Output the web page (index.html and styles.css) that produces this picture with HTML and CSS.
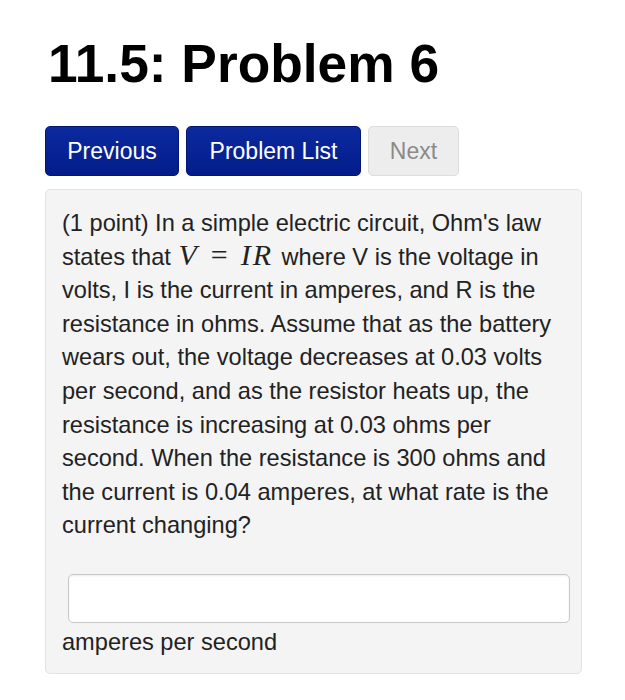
FILE: index.html
```html
<!DOCTYPE html>
<html>
<head>
<meta charset="utf-8">
<link rel="stylesheet" href="styles.css">
</head>
<body>
<div class="page">
  <h1 class="title">11.5: Problem 6</h1>
  <div class="nav">
    <span class="btn btn-primary">Previous</span>
    <span class="btn btn-primary">Problem List</span>
    <span class="btn btn-disabled">Next</span>
  </div>
  <div class="well">
    <p class="problem">(1 point) In a simple electric circuit, Ohm's law states that <span class="math"><i>V</i><span class="eq">=</span><i>IR</i></span> where V is the voltage in volts, I is the current in amperes, and R is the resistance in ohms. Assume that as the battery wears out, the voltage decreases at 0.03 volts per second, and as the resistor heats up, the resistance is increasing at 0.03 ohms per second. When the resistance is 300 ohms and the current is 0.04 amperes, at what rate is the current changing?</p>
    <div class="answer">
      <input class="field" type="text">
    </div>
    <div class="unit">amperes per second</div>
  </div>
</div>
</body>
</html>
```
FILE: styles.css
```css
html, body {
  margin: 0;
  padding: 0;
  background: #fff;
}
body {
  font-family: "Liberation Sans", Arial, sans-serif;
  color: #333;
}
.page {
  padding: 0 43px 0 45px;
}
.title {
  margin: 0;
  padding: 34px 0 0 3px;
  font-size: 53.3px;
  line-height: 60px;
  font-weight: bold;
  color: #000;
}
.nav {
  display: flex;
  gap: 7px;
  margin-top: 32px;
}
.btn {
  display: flex;
  align-items: center;
  justify-content: center;
  height: 50px;
  box-sizing: border-box;
  border-radius: 5px;
  font-size: 23px;
  padding: 0 10px;
}
.btn-primary {
  color: #fff;
  background: linear-gradient(#0b2a9e, #031c8a);
  border: 1px solid #021775;
}
.btn-primary:first-child {
  width: 134px;
}
.btn-primary:nth-child(2) {
  width: 175px;
}
.btn-disabled {
  width: 91px;
  color: #8a8a8a;
  background: #ededed;
  border: 1px solid #dcdcdc;
}
.well {
  margin-top: 13px;
  background: #f4f4f4;
  border: 1px solid #e3e3e3;
  border-radius: 5px;
  padding: 17px 22px 15px 16px;
  box-sizing: border-box;
  width: 537px;
}
.problem {
  margin: 0;
  font-size: 23.6px;
  line-height: 33.6px;
  color: #222;
}
.math {
  font-family: "Liberation Serif", "Times New Roman", serif;
  font-size: 30px;
  line-height: 20px;
  margin: 0 2px 0 1px;
}
.math i {
  font-style: italic;
  letter-spacing: 2px;
}
.eq {
  margin: 0 13px 0 12px;
}
.answer {
  margin: 31px -11px 0 6px;
}
.field {
  display: block;
  width: 100%;
  height: 49px;
  box-sizing: border-box;
  border: 1px solid #c8c8c8;
  border-radius: 5px;
  background: #fff;
  box-shadow: inset 0 1px 2px rgba(0,0,0,0.08);
}
.unit {
  margin-top: 3px;
  font-size: 23.6px;
  line-height: 32px;
  color: #222;
}
```
